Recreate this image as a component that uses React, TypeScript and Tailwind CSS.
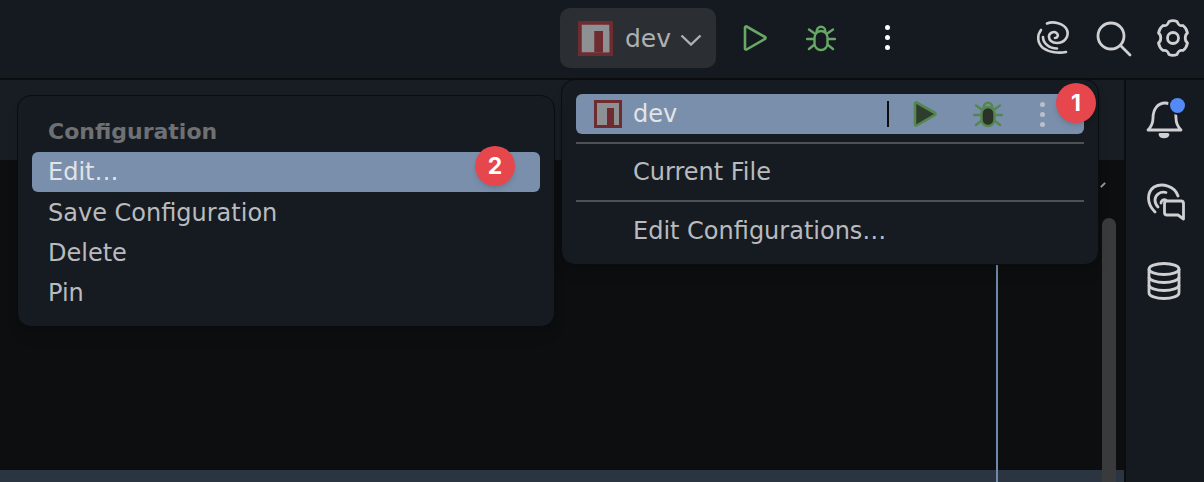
const font = { fontFamily: '"DejaVu Sans", sans-serif' };

// run configuration icon, red square with the n shape
const ConfigIcon = ({ size, light }: { size: number; light?: boolean }) => (
  <svg width={size} height={size} viewBox="0 0 28 28">
    <rect width="28" height="28" fill={light ? "#9a6274" : "#6e2c30"} />
    <rect x="3" y="3" width="22" height="22" fill={light ? "#b8c6da" : "#8d9194"} />
    <path d="M14 25V9h5v16h6V3H14z" fill="none" />
    <path d="M13.5 25V8h6v17h2V3h-8z" fill="none" />
    <rect x="13" y="8" width="7" height="17" fill={light ? "#9a6274" : "#6e2c30"} />
    <rect x="13" y="8" width="0" height="0" />
    <rect x="20" y="8" width="5" height="17" fill={light ? "#b8c6da" : "#8d9194"} />
  </svg>
);

const PlayIcon = ({ solid }: { solid?: boolean }) => (
  <svg width="26" height="28" viewBox="0 0 26 28">
    <path
      d="M3 3.5c0-.9.9-1.4 1.6-1L23 13c.7.4.7 1.4 0 1.8L4.600 25.500c-.7.4-1.600-.1-1.600-1z"
      fill={solid ? "#2f3d2f" : "none"}
      stroke={solid ? "#55864f" : "#68a765"}
      strokeWidth="2.600"
      strokeLinejoin="round"
    />
  </svg>
);

const BugIcon = ({ solid }: { solid?: boolean }) => {
  const line = solid ? "#55864f" : "#68a765";
  return (
    <svg width="30" height="28" viewBox="0 0 30 28" fill="none" stroke={line} strokeWidth="2.400" strokeLinecap="round">
      <path d="M10.500 8c0-7 9-7 9 0" />
      <rect x="8.500" y="7" width="13" height="19" rx="6.500" fill={solid ? "#2b3328" : "none"} />
      <path d="M8 9 3 5.500M22 9l5-3.500M1 15h7M22 15h7M8 21l-5 4M22 21l5 4" />
    </svg>
  );
};

const Dots = ({ color }: { color: string }) => (
  <div className="flex flex-col gap-[5px]">
    <span className={`w-[5px] h-[5px] rounded-full ${color}`} />
    <span className={`w-[5px] h-[5px] rounded-full ${color}`} />
    <span className={`w-[5px] h-[5px] rounded-full ${color}`} />
  </div>
);

const Badge = ({ n, className }: { n: number; className: string }) => (
  <span
    className={`absolute w-10 h-10 rounded-full bg-[#e5474d] text-white flex items-center justify-center text-[23px] font-bold shadow-md ${className}`}
    style={{ fontFamily: "Inter, sans-serif" }}
  >
    {n}
  </span>
);

const Separator = () => <div className="mx-[14px] h-[2px] bg-[#4f5255]" />;

const App = () => {
  return (
    <div className="relative w-[1204px] h-[482px] overflow-hidden flex flex-col bg-[#151a21] text-[#b9bbbe]" style={font}>
      {/* Top bar */}
      <div className="h-[80px] flex items-start border-b-2 border-[#0b0d0f] bg-[#151a21]">
        <div className="ml-[560px] mt-2 w-[156px] h-[60px] rounded-[10px] bg-[#2b2f33] flex items-center pl-[18px]">
          <ConfigIcon size={35} />
          <span className="ml-3 text-[25px] leading-none text-[#aeb0b2]">dev</span>
          <svg className="ml-[9px] mt-1" width="22" height="12" viewBox="0 0 22 12" fill="none" stroke="#aeb0b2" strokeWidth="2.400">
            <path d="M1.500 1.500 11 10.500l9.500-9" />
          </svg>
        </div>
        <div className="ml-[26px] mt-6"><PlayIcon /></div>
        <div className="ml-[38px] mt-6"><BugIcon /></div>
        <div className="ml-[49px] mt-[25px]"><Dots color="bg-white" /></div>

        {/* Right side tools */}
        <svg className="ml-[146px] mt-[21px]" width="34" height="34" viewBox="0 0 34 34" fill="none" stroke="#cfd0d2" strokeWidth="2.600" strokeLinecap="round">
          <path d="M11 2.500C17 0 28 2 31 9c2.500 7-3 13-10 13-5 0-8.500-3-8-7 .5-3.500 5-5 7.500-3 2.500 2 1 5-1.500 5" />
          <path d="M5 9C1 14 1 22 7 27c6 4.500 16 5.500 23 4" />
          <path d="M7 16c0 6 6 11.500 14 11.500" />
        </svg>
        <svg className="ml-[26px] mt-[21px]" width="36" height="36" viewBox="0 0 36 36" fill="none" stroke="#cfd0d2" strokeWidth="2.800" strokeLinecap="round">
          <circle cx="15" cy="15" r="13" />
          <path d="m25 25 9 9" />
        </svg>
        <svg className="ml-[23px] mt-[19px]" width="36" height="38" viewBox="0 0 36 38" fill="none" stroke="#cfd0d2" strokeWidth="2.800" strokeLinejoin="round">
          <path d="M14 2.500c2.500-1 5.500-1 8 0 1 2.500 2 5 6 4 2 1.500 4 5 4.500 7.500-3 2-3 8 0 10-.5 2.500-2.500 6-4.500 7.500-4-1-5 1.500-6 4-2.500 1-5.500 1-8 0-1-2.500-2-5-6-4-2-1.500-4-5-4.500-7.500 3-2 3-8 0-10C4 11.500 6 8 8 6.500c4 1 5-1.500 6-4z" />
          <circle cx="18" cy="19" r="5.500" />
        </svg>
      </div>

      <div className="flex-1 flex">
        {/* Main column */}
        <div className="flex-1 flex flex-col">
          <div className="h-[80px] bg-[#181d23]" />
          <div className="flex-1 bg-[#0c0e10]" />
          <div className="h-3 bg-[#2a3541]" />
        </div>

        {/* Right tool strip */}
        <div className="w-[80px] border-l-2 border-[#0b0d0f] flex flex-col items-center">
          <div className="relative mt-[19px] ml-[-3px]">
            <svg width="38" height="40" viewBox="0 0 38 40" fill="none" stroke="#cfd0d2" strokeWidth="2.800" strokeLinejoin="round">
              <path d="M3 31c3-3 5-6 5-12 0-9 5-15 12-15s11 6 11 15c0 6 2 9 5 12z" />
              <path d="M15 35.500c1 3 7 3 8 0z" fill="#cfd0d2" />
            </svg>
            <span className="absolute top-[-1px] right-[-2px] w-[15px] h-[15px] rounded-full bg-[#548af7] ring-2 ring-[#151a21]" />
          </div>
          <svg className="mt-[44px] ml-[2px]" width="38" height="38" viewBox="0 0 38 38" fill="none" stroke="#cfd0d2" strokeWidth="2.800" strokeLinecap="round">
            <path d="M31 13C28 3 15-.5 7 4 0 9-1 20 8 29" />
            <path d="M19 9.500C13 8 8 12 8 17c0 3 1 5 3 7" />
            <path d="M19 17c-3-1-5 1-5 3" />
            <path d="M20 18h14a2.500 2.500 0 0 1 2.500 2.500V36L31 32H20a2.500 2.500 0 0 1-2.500-2.500v-9A2.500 2.500 0 0 1 20 18z" strokeLinejoin="round" />
          </svg>
          <svg className="mt-[41px] ml-[-3px]" width="34" height="38" viewBox="0 0 34 38" fill="none" stroke="#cfd0d2" strokeWidth="2.800">
            <ellipse cx="17" cy="7" rx="15" ry="5.500" />
            <path d="M2 7v24c0 3 7 5.500 15 5.500S32 34 32 31V7" />
            <path d="M2 15c0 3 7 5.500 15 5.500S32 18 32 15M2 23c0 3 7 5.500 15 5.500S32 26 32 23" />
          </svg>
        </div>
      </div>

      {/* Overlays on the editor */}
      <div className="absolute left-[996px] top-[264px] bottom-0 w-[2px] bg-[#7089a8]" />
      <div className="absolute left-[1102px] top-[218px] bottom-0 w-[14px] rounded-t-[7px] bg-[#383a3c]" />
      <div className="absolute left-[1100px] top-[184px] w-[6px] h-[2px] -rotate-45 bg-[#9a9c9e]" />

      {/* Context menu */}
      <div className="absolute left-[17px] top-[95px] w-[538px] h-[232px] rounded-[14px] bg-[#161b22] border border-[#0a0c0e] pt-[21px] text-[24px] leading-[40px] shadow-lg">
        <div className="pl-[30px] h-[35px] leading-[30px] text-[#6e7073] font-bold text-[22px]">Configuration</div>
        <div className="mx-[14px] h-[40px] rounded-[6px] bg-[#7a8fac] pl-4 text-[#e2e4e6]">Edit…</div>
        <div className="pl-[30px] mt-px">Save Configuration</div>
        <div className="pl-[30px]">Delete</div>
        <div className="pl-[30px]">Pin</div>
      </div>
      <Badge n={2} className="left-[475px] top-[146px]" />

      {/* Run configurations popup */}
      <div className="absolute left-[561px] top-[79px] w-[538px] h-[186px] rounded-[14px] bg-[#161b22] border border-[#0a0c0e] pt-[14px] text-[24px] shadow-lg">
        <div className="mx-[14px] h-[40px] rounded-[6px] bg-[#7a8fac] flex items-center pl-[18px] text-[#e2e4e6]">
          <ConfigIcon size={28} />
          <span className="ml-[11px]">dev</span>
          <span className="ml-[210px] w-[2px] h-[26px] bg-[#0c0e10]" />
          <span className="ml-[23px] flex"><PlayIcon solid /></span>
          <span className="ml-[35px] flex"><BugIcon solid /></span>
          <span className="ml-[37px] flex"><Dots color="bg-[#b8c0c8]" /></span>
        </div>
        <div className="mt-2"><Separator /></div>
        <div className="h-[56px] leading-[56px] pl-[71px]">Current File</div>
        <Separator />
        <div className="h-[58px] leading-[58px] pl-[71px]">Edit Configurations…</div>
      </div>
      <Badge n={1} className="left-[1056px] top-[83px]" />
    </div>
  );
};

export default App;
